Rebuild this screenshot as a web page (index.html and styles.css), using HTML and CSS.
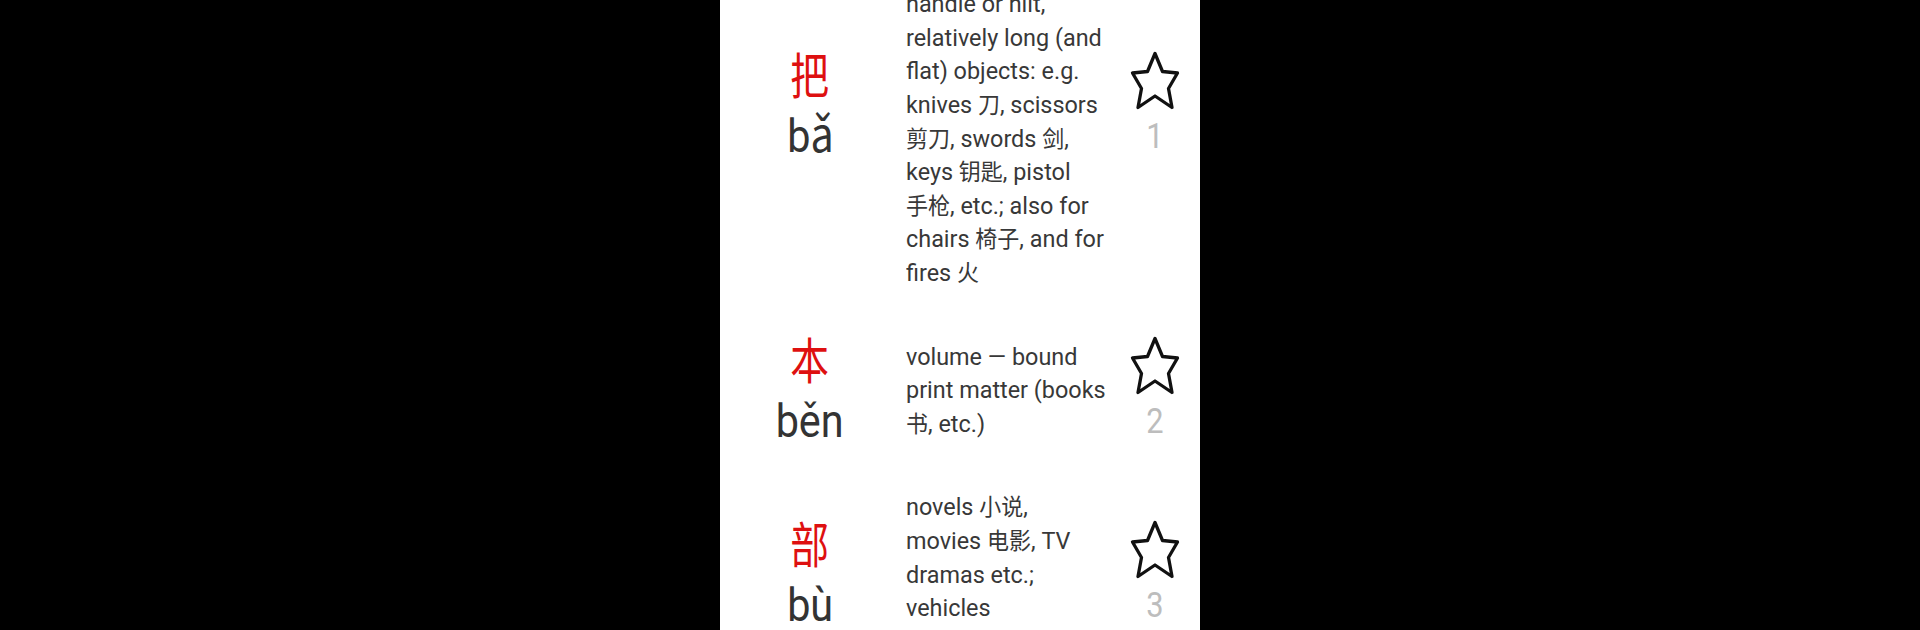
FILE: index.html
```html
<!DOCTYPE html>
<html lang="en">
<head>
<meta charset="utf-8">
<title>Measure words</title>
<link rel="stylesheet" href="styles.css">
</head>
<body>
<div class="stage">
  <main class="panel">
    <ul class="list">
      <li class="row">
        <div class="word"><span class="hanzi">把</span><span class="pinyin">bǎ</span></div>
        <p class="def">measure word for objects with a handle or hilt, relatively long (and flat) objects: e.g. knives <span class="zh">刀</span>, scissors <span class="zh">剪刀</span>, swords <span class="zh">剑</span>, keys <span class="zh">钥匙</span>, pistol <span class="zh">手枪</span>, etc.; also for chairs <span class="zh">椅子</span>, and for fires <span class="zh">火</span></p>
        <div class="fav">
          <svg class="star" viewBox="0 0 50 60" width="50" height="60"><polygon points="25,2.5 32.5,20.5 47.5,22 38.5,37.5 42,56.5 25,45 8,56.5 11.5,37.5 2.5,22 17.5,20.5"/></svg>
          <span class="num">1</span>
        </div>
      </li>
      <li class="row">
        <div class="word"><span class="hanzi">本</span><span class="pinyin">běn</span></div>
        <p class="def">volume — bound print matter (books <span class="zh">书</span>, etc.)</p>
        <div class="fav">
          <svg class="star" viewBox="0 0 50 60" width="50" height="60"><polygon points="25,2.5 32.5,20.5 47.5,22 38.5,37.5 42,56.5 25,45 8,56.5 11.5,37.5 2.5,22 17.5,20.5"/></svg>
          <span class="num">2</span>
        </div>
      </li>
      <li class="row">
        <div class="word"><span class="hanzi">部</span><span class="pinyin">bù</span></div>
        <p class="def">novels <span class="zh">小说</span>, movies <span class="zh">电影</span>, TV dramas etc.; vehicles (automobiles <span class="zh">汽车</span>)</p>
        <div class="fav">
          <svg class="star" viewBox="0 0 50 60" width="50" height="60"><polygon points="25,2.5 32.5,20.5 47.5,22 38.5,37.5 42,56.5 25,45 8,56.5 11.5,37.5 2.5,22 17.5,20.5"/></svg>
          <span class="num">3</span>
        </div>
      </li>
    </ul>
  </main>
</div>
</body>
</html>
```
FILE: styles.css
```css
html, body {
  margin: 0;
  padding: 0;
  background: #000;
  height: 630px;
  overflow: hidden;
}
.stage {
  display: flex;
  justify-content: center;
  height: 630px;
}
.panel {
  width: 480px;
  height: 630px;
  background: #fff;
  overflow: hidden;
  font-family: "Roboto", "Noto Sans CJK SC", sans-serif;
}
.list {
  list-style: none;
  margin: -105px 0 0 0;
  padding: 0;
}
.row {
  display: grid;
  grid-template-columns: 180px 198px 90px;
  column-gap: 6px;
  align-items: center;
  padding: 25px 0;
}
.word {
  display: flex;
  flex-direction: column;
  align-items: center;
  margin: -13px 0;
}
.hanzi {
  display: block;
  font-family: "Noto Sans CJK SC", sans-serif;
  font-size: 49px;
  line-height: 62px;
  color: #de1010;
  transform: scaleX(0.79);
}
.pinyin {
  display: block;
  font-size: 47px;
  line-height: 64px;
  color: #333;
  transform: scaleX(0.88);
}
.def {
  margin: 0;
  width: 210px;
  font-size: 24.5px;
  line-height: 33.6px;
  color: #383838;
  word-break: keep-all;
  transform: scaleX(0.955);
  transform-origin: left center;
}
.zh {
  font-family: "Noto Sans CJK SC", sans-serif;
  font-size: 0.94em;
  line-height: 16px;
}
.fav {
  display: flex;
  flex-direction: column;
  align-items: center;
  gap: 10px;
  margin-top: -6px;
}
.star {
  display: block;
  fill: none;
  stroke: #111;
  stroke-width: 3.3;
  stroke-linejoin: round;
}
.num {
  display: block;
  font-size: 35px;
  line-height: 32px;
  color: #bdbdbd;
  transform: scaleX(0.88);
}
```
